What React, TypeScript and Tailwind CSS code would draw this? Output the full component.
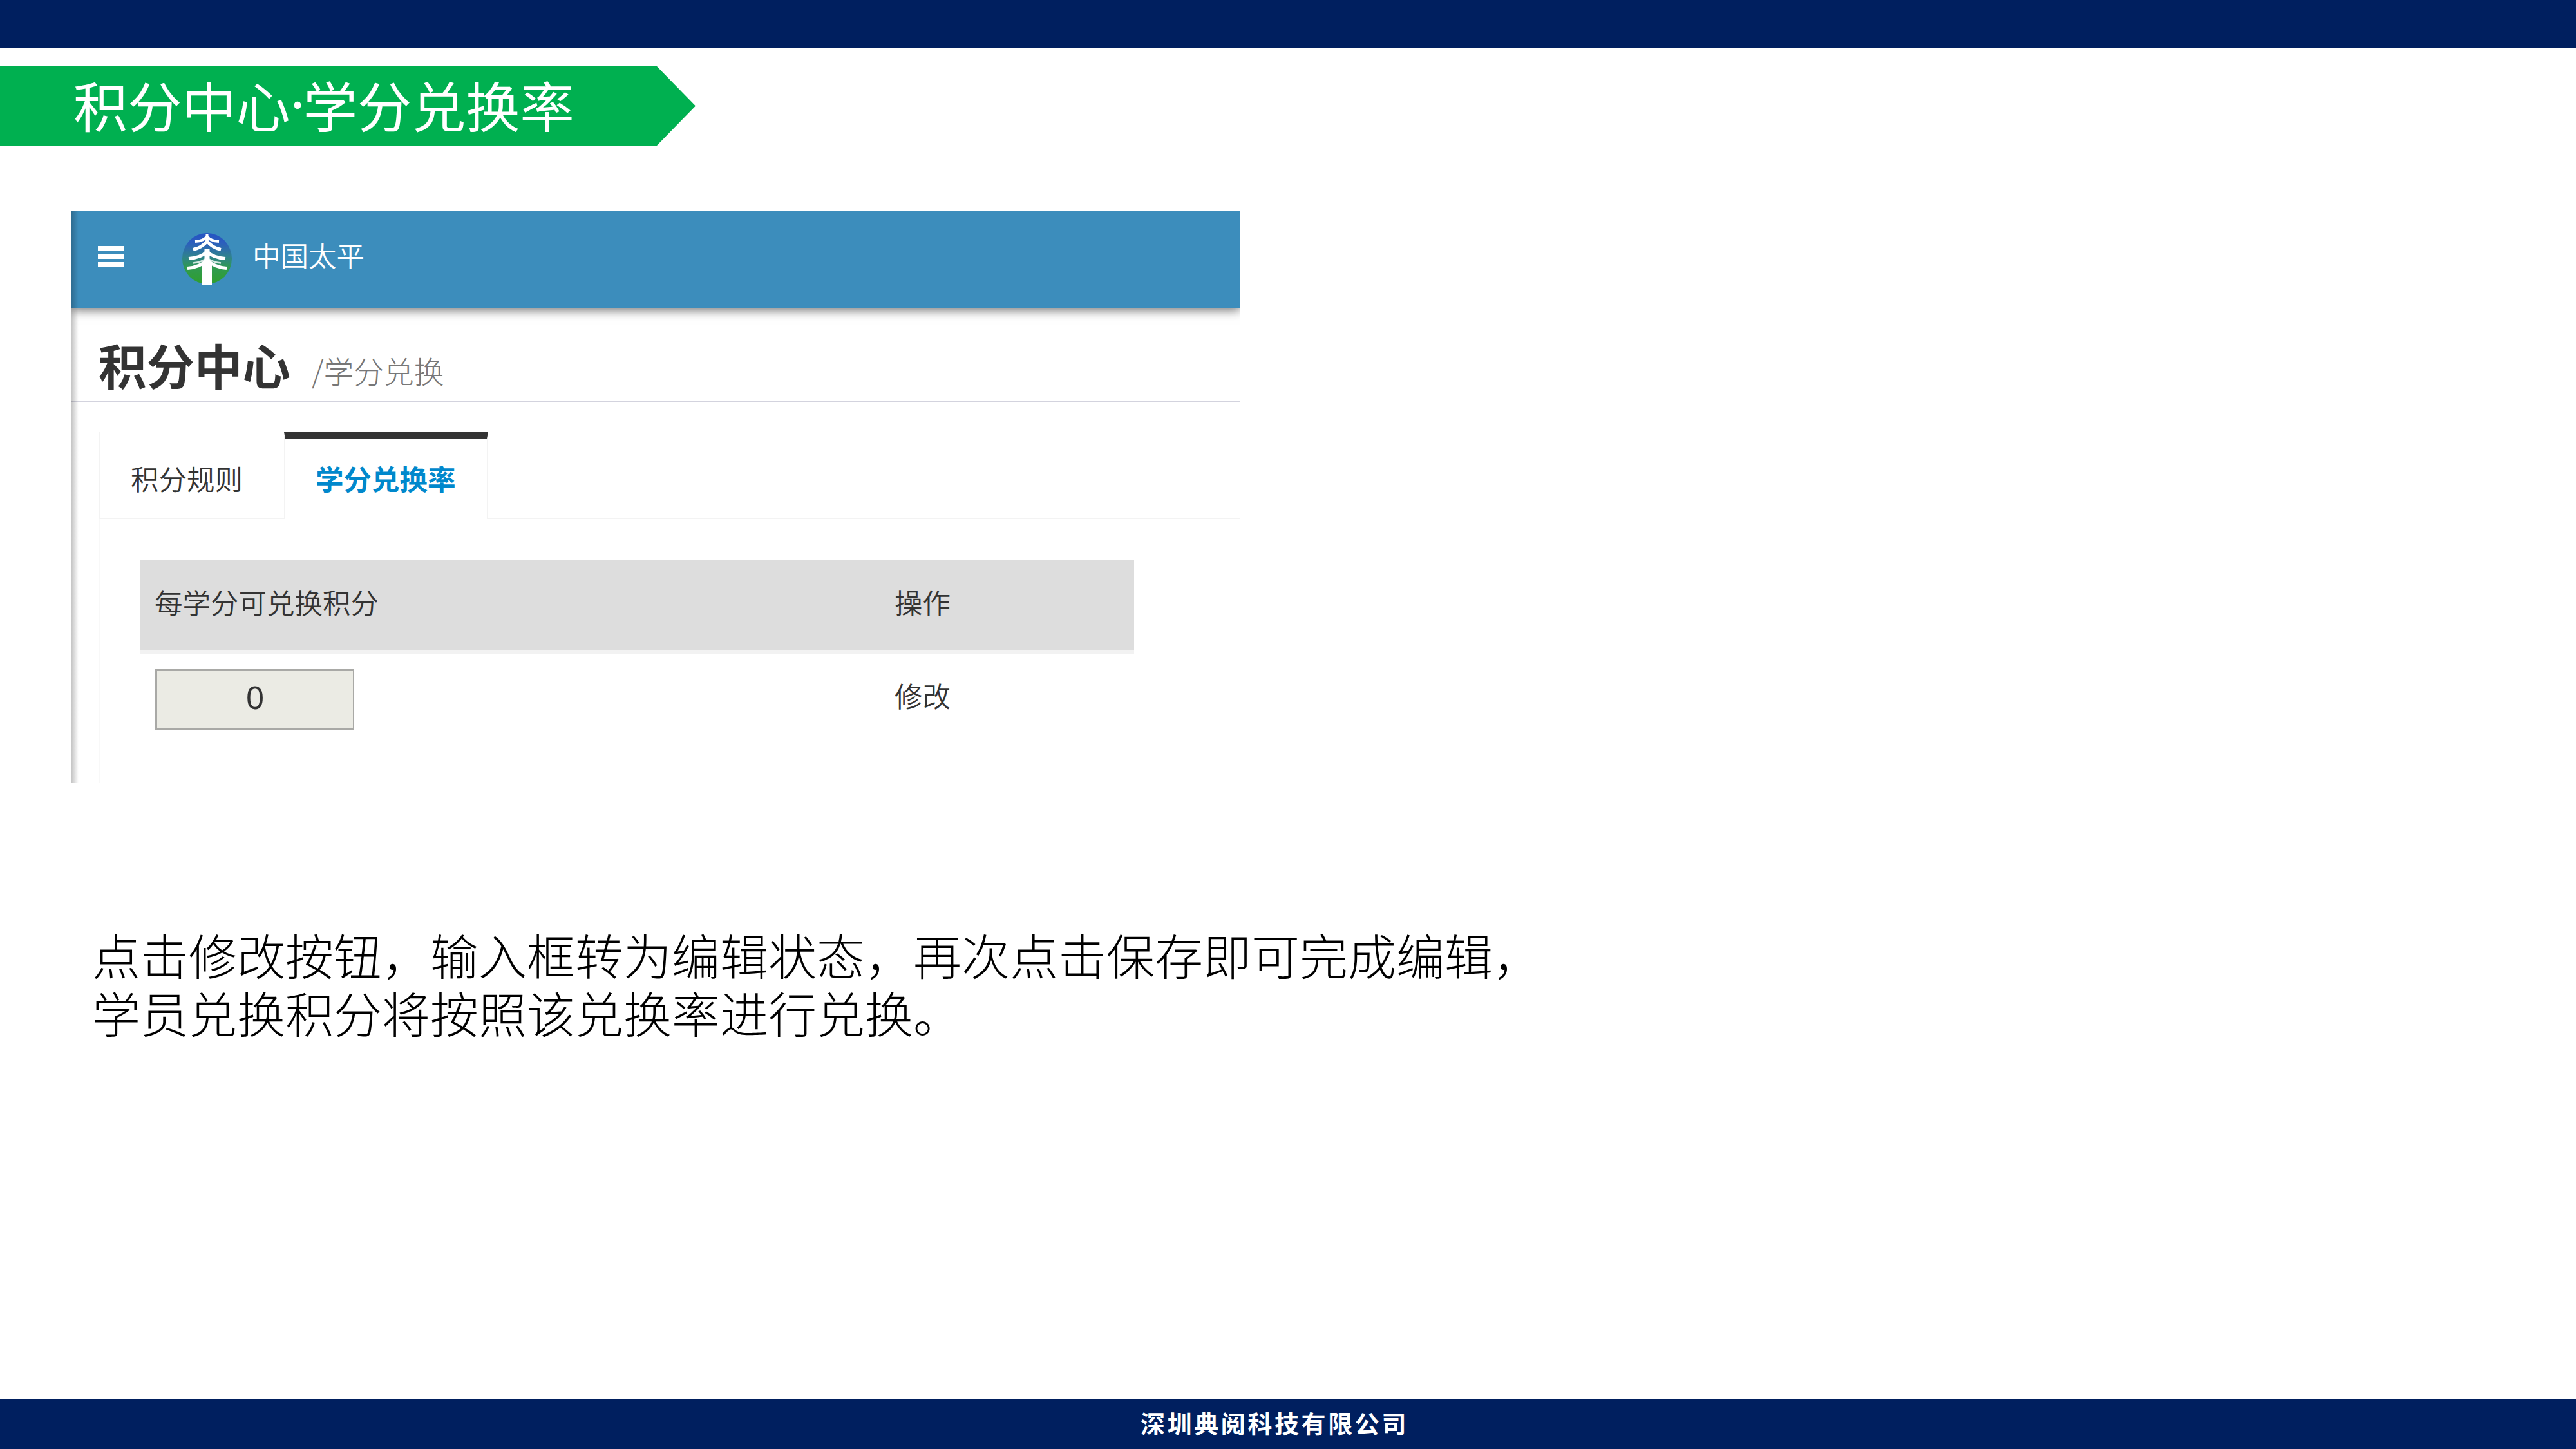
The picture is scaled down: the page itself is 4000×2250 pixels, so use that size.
function TreeLogo() {
  return (
    <svg className="block h-[80px] w-[77px]" viewBox="0 0 77 80">
      <defs>
        <linearGradient id="sky" x1="0" y1="0" x2="0" y2="1">
          <stop offset="0" stopColor="#2453c4" />
          <stop offset="0.2" stopColor="#2c5fbc" />
          <stop offset="0.45" stopColor="#2f8090" />
          <stop offset="0.68" stopColor="#309a50" />
          <stop offset="1" stopColor="#2f9f2c" />
        </linearGradient>
      </defs>
      <ellipse cx="38.5" cy="39.5" rx="38.5" ry="39.5" fill="url(#sky)" />
      <g fill="none" stroke="#fff">
        <path d="M38.500 1v15" strokeWidth="4" />
        <path d="M38.500 24v30" strokeWidth="8" />
        <path d="M38.500 48v32" strokeWidth="15" />
        <path d="M20 13c9-.5 15-3 18.500-8 3.500 5 9.500 7.500 18.500 8" strokeWidth="4" />
        <path d="M17 25.500c9-2 16-6 21.500-13 5.500 7 12.500 11 21.500 13" strokeWidth="5" />
        <path d="M10 39.500c13-1 22-4 28.500-11 6.500 7 15.500 10 28.500 11" strokeWidth="5" />
        <path d="M17 46.500c9-1 16-3.500 21.500-8 5.500 4.500 12.500 7 21.500 8" strokeWidth="2.500" opacity="0.8" />
        <path d="M8 54.500c12-1 23-5 30.500-13 7.500 8 18.500 12 30.500 13" strokeWidth="5" />
      </g>
    </svg>
  );
}

function MenuIcon() {
  return (
    <div className="flex w-[40px] flex-col gap-[5px]">
      <div className="h-[8px] bg-white" />
      <div className="h-[7px] bg-white" />
      <div className="h-[7px] bg-white" />
    </div>
  );
}

function AppPanel() {
  return (
    <section className="relative ml-[110px] mt-[101px] h-[889px] w-[1816px] overflow-hidden text-[43.5px] leading-[44px] text-[#333]">
      <header className="relative flex h-[152px] items-start bg-[#3c8dbc] text-white shadow-[0_2px_16px_rgba(0,0,0,0.6)]">
        <div className="ml-[42px] mt-[55px]">
          <MenuIcon />
        </div>
        <div className="ml-[91px] mt-[35px]">
          <TreeLogo />
        </div>
        <span className="ml-[32px] mt-[47px] font-[350]">中国太平</span>
      </header>

      <div className="flex h-[145px] items-start border-b-2 border-[#d3d3de]">
        <h1 className="ml-[43px] mt-[50px] text-[74.5px] font-bold leading-[74px]">积分中心</h1>
        <span className="ml-[33px] mt-[73px] text-[46.8px] font-light leading-[46px] text-[#777]">/学分兑换</span>
      </div>

      <div className="ml-[43px] mt-[47px] flex h-[135px]">
        <div className="w-[288px] border-b-2 border-l-2 border-[#f3f3f3] pl-[48px] pt-[50px] font-[350]">积分规则</div>
        <div className="w-[317px] border-x-2 border-t-[10px] border-x-[#f3f3f3] border-t-[#333] pl-[47px] pt-[40px] font-bold text-[#08c]">
          学分兑换率
        </div>
        <div className="flex-1 border-b-2 border-[#f3f3f3]" />
      </div>

      <div className="ml-[43px] h-[410px] border-l-2 border-[#f8f8f8] pl-[62px] pt-[63px]">
        <div className="flex h-[146px] w-[1544px] border-b-[5px] border-[#f2f2f2] bg-[#ddd] pt-[44px] font-[350]">
          <span className="w-[1172px] pl-[23px]">每学分可兑换积分</span>
          <span>操作</span>
        </div>
        <div className="flex w-[1544px] items-start pt-[24px] font-[350]">
          <div className="w-[1172px] pl-[24px]">
            <div className="h-[94px] w-[309px] border-b-2 border-l-[3px] border-r-2 border-t-[3px] border-[#a9a9a6] bg-[#ebebe4] pt-[15px] text-center font-['Noto_Sans'] text-[50px] font-normal leading-[50px]">
              0
            </div>
          </div>
          <span className="mt-[19px]">修改</span>
        </div>
      </div>

      <div className="absolute inset-y-0 left-0 w-[12px] bg-linear-to-r from-black/25 to-transparent" />
    </section>
  );
}

export default function App() {
  return (
    <main className="flex h-[2250px] w-[4000px] flex-col overflow-hidden bg-white font-['Noto_Sans_CJK_SC',sans-serif]">
      <div className="h-[75px] shrink-0 bg-[#001f5f]" />
      <div className="mt-[28px] flex h-[123px] w-[1080px] shrink-0 items-center bg-[#00b050] pb-[7px] pl-[114px] text-[84.2px] leading-[84px] text-white [clip-path:polygon(0_0,1020px_0,100%_50%,1020px_100%,0_100%)]">
        <span>积分中心</span>
        <span className="w-[20px] text-center font-['Noto_Sans']">·</span>
        <span>学分兑换率</span>
      </div>
      <AppPanel />
      <div className="ml-[143px] mt-[221px] text-[75px] font-light leading-[90px] text-black">
        <p>点击修改按钮，输入框转为编辑状态，再次点击保存即可完成编辑，</p>
        <p>学员兑换积分将按照该兑换率进行兑换。</p>
      </div>
      <footer className="mt-auto flex h-[77px] shrink-0 items-center bg-[#001f5f] pb-[5px] pl-[1771px] text-[38px] font-bold leading-[40px] tracking-[3.600px] text-white">
        深圳典阅科技有限公司
      </footer>
    </main>
  );
}
